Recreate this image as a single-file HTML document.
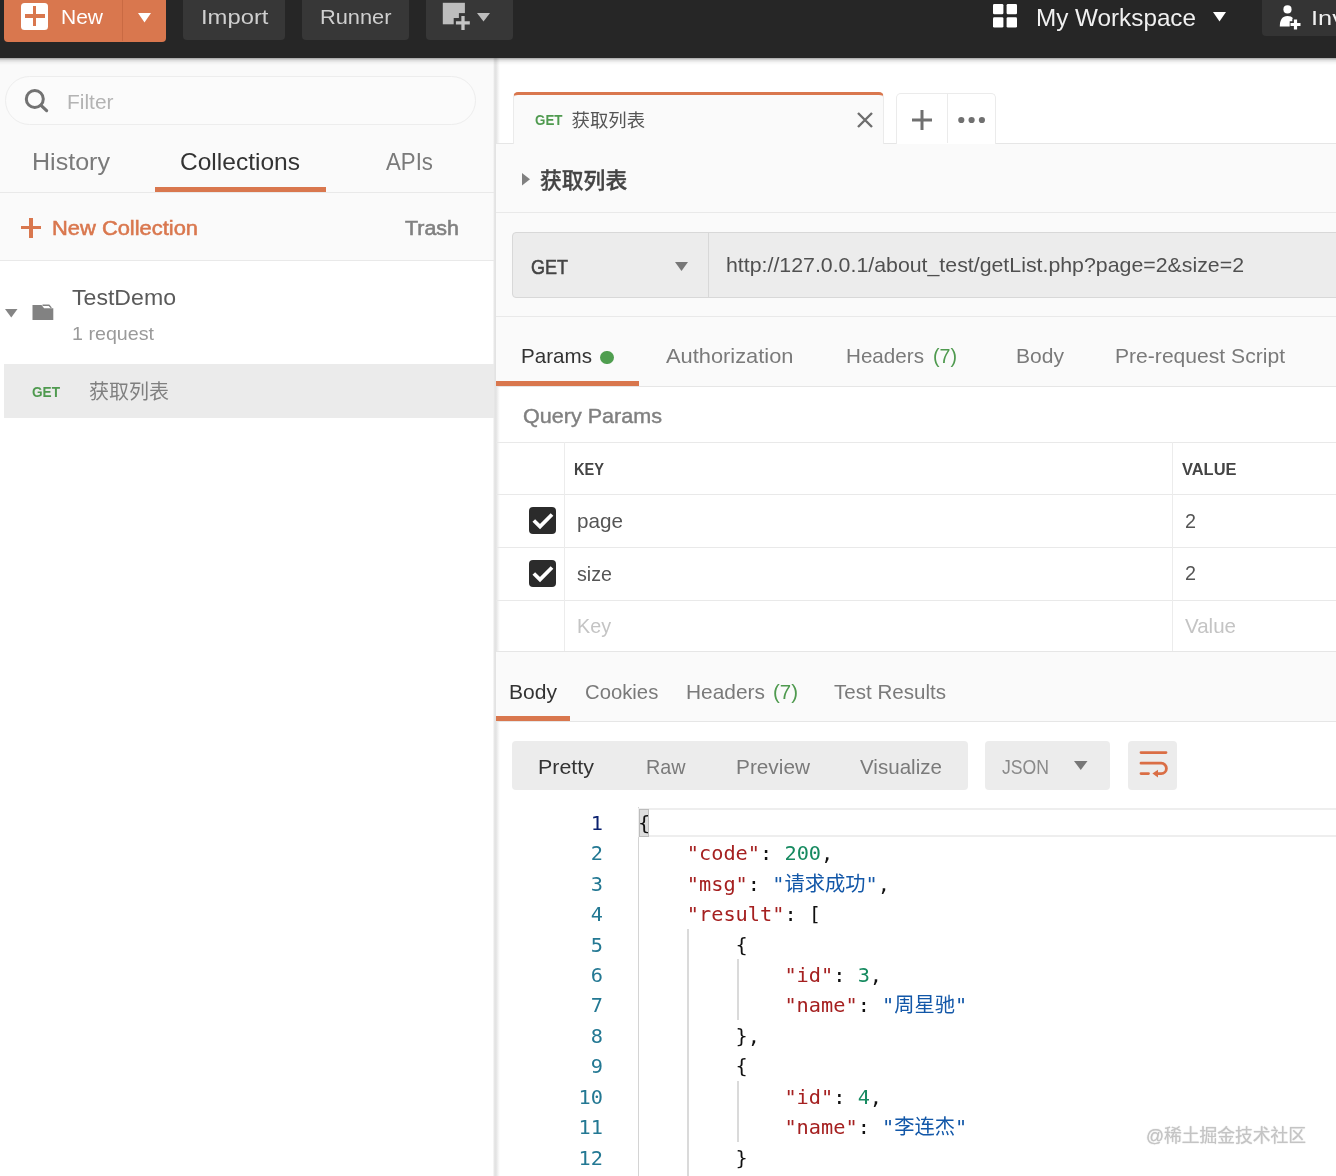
<!DOCTYPE html>
<html lang="zh-CN">
<head>
<meta charset="utf-8">
<title>Postman</title>
<style>
*{box-sizing:border-box;margin:0;padding:0}
html,body{width:1336px;height:1176px;overflow:hidden;background:#fff}
body{position:relative;font-family:"Liberation Sans","Noto Sans CJK SC",sans-serif;-webkit-font-smoothing:antialiased}
.a{position:absolute}
.t{position:absolute;white-space:nowrap;line-height:1;display:block;transform-origin:0 50%}
div{position:absolute}
svg{position:absolute;overflow:visible}
/* top bar */
#top{left:0;top:0;width:1336px;height:58px;background:#262626}
#topsh{left:0;top:58px;width:1336px;height:7px;z-index:5;background:linear-gradient(rgba(0,0,0,.36),rgba(0,0,0,.13) 30%,rgba(0,0,0,.04) 65%,rgba(0,0,0,0))}
.btn{top:-4px;border-radius:4px;background:#373737}
/* sidebar */
#side{left:0;top:58px;width:494px;height:1118px;background:#fafafa}
#sidew{left:0;top:260px;width:494px;height:916px;background:#fff}
#sdiv{left:493px;top:58px;width:7px;height:1118px;background:linear-gradient(to right,#fafafa,#e2e2e2 26%,#e4e4e4 45%,#f4f4f4 75%,#fff)}
.hl{height:1px;background:#e9e9e9}
.vl{width:1px;background:#ececec}
.or{background:#d9774e}
/* code */
.ln{left:540px;width:63px;text-align:right;font-family:"DejaVu Sans Mono","Liberation Mono",monospace;font-size:20.27px;line-height:30.45px;height:30.45px;color:#237893;white-space:pre}
.ln.a{color:#0b216f}
.cl{left:638px;font-family:"DejaVu Sans Mono","Liberation Mono","Noto Sans CJK SC",monospace;font-size:20.27px;line-height:30.45px;height:30.45px;color:#000;white-space:pre}
.ck{color:#a52020}.cn{color:#168a60}.cv{color:#1257a8}.cp{color:#111}
.ig{width:1.500px;background:#dadada}
.cb{width:27px;height:27px;border-radius:4px;background:#2b2b2b}
</style>
</head>
<body>
<!-- ================= TOP BAR ================= -->
<div id="top"></div>
<div class="btn or" style="left:4px;width:162px;height:45.500px;background:#d9774e"></div>
<div style="left:122px;top:0;width:1px;height:41px;background:#c96a43"></div>
<div style="left:21px;top:2.500px;width:27px;height:27px;border-radius:3.500px;background:#fff"></div>
<div class="or" style="left:24.500px;top:14.300px;width:20px;height:3.400px"></div>
<div class="or" style="left:32.800px;top:6px;width:3.400px;height:20px"></div>
<svg style="left:138px;top:12.500px" width="13" height="10"><path d="M0 0h13l-6.500 9.500z" fill="#fff"/></svg>
<div class="btn" style="left:183px;width:102px;height:44.400px"></div>
<div class="btn" style="left:302px;width:106.5px;height:44px"></div>
<div class="btn" style="left:426px;width:87px;height:44.400px"></div>
<svg style="left:442px;top:2px" width="30" height="30"><rect x="0.800" y="0.800" width="22.100" height="21.500" fill="#bdbdbd"/><rect x="16.900" y="11.100" width="9" height="14" fill="#373737"/><rect x="11.700" y="16" width="14" height="9.600" fill="#373737"/><path d="M21 14.100v13.800M13.900 20.800h13.900" stroke="#c4c4c4" stroke-width="3.300" fill="none"/></svg>
<svg style="left:477px;top:13px" width="13" height="9"><path d="M0 0h13l-6.500 8.500z" fill="#bdbdbd"/></svg>
<svg style="left:993.300px;top:4.200px" width="24" height="24"><rect x="0" y="0" width="10.400" height="10.200" rx="1.300" fill="#fff"/><rect x="13.600" y="0" width="10.400" height="10.200" rx="1.300" fill="#fff"/><rect x="0" y="13.300" width="10.400" height="10.200" rx="1.300" fill="#fff"/><rect x="13.600" y="13.300" width="10.400" height="10.200" rx="1.300" fill="#fff"/></svg>
<svg style="left:1213px;top:12px" width="13" height="10"><path d="M0 0h13l-6.500 9.500z" fill="#fff"/></svg>
<div class="btn" style="left:1261.500px;width:90px;height:40.300px;background:#343434"></div>
<svg style="left:1279px;top:5px" width="23" height="26"><circle cx="8.500" cy="4.400" r="4.100" fill="#fff"/><path d="M0.800 21.600C0.800 14.500 3.300 11 8.500 11C11 11 12.800 11.800 14 13.200L14 21.600Z" fill="#fff"/><path d="M16.500 13.600v11.600M10.700 19.400h11.600" stroke="#343434" stroke-width="6.400" fill="none"/><path d="M16.500 14.500v10M11.500 19.500h10" stroke="#fff" stroke-width="3.200" fill="none"/></svg>
<div id="topsh"></div>

<!-- ================= SIDEBAR ================= -->
<div id="side"></div>
<div id="sidew"></div>
<div id="sdiv"></div>
<div style="left:5px;top:75.500px;width:471px;height:49.500px;border-radius:25px;border:1px solid #ededed;background:#fbfbfb"></div>
<svg style="left:22px;top:88px" width="28" height="28"><circle cx="12.800" cy="11" r="8.500" fill="none" stroke="#727272" stroke-width="3"/><path d="M19 17.400l5.600 5.200" stroke="#727272" stroke-width="3.200" stroke-linecap="round"/></svg>
<div class="or" style="left:154.500px;top:187px;width:171px;height:5px"></div>
<div class="hl" style="left:0;top:192px;width:494px"></div>
<div class="or" style="left:21px;top:226px;width:20px;height:3.300px"></div>
<div class="or" style="left:29.400px;top:217.600px;width:3.300px;height:20px"></div>
<div class="hl" style="left:0;top:260px;width:494px"></div>
<svg style="left:4.500px;top:308.500px" width="13" height="9"><path d="M0 0h12.500l-6.250 8.500z" fill="#858585"/></svg>
<svg style="left:32px;top:304px" width="22" height="17"><path d="M0.500 1h9l2.600 3.200h9.200v11.800h-20.800z" fill="#828282"/><path d="M10.500 1.300h6.500l2.300 2.600" fill="none" stroke="#828282" stroke-width="1.400"/></svg>
<div style="left:4px;top:364px;width:490px;height:54px;background:#ebebeb"></div>

<!-- ================= MAIN ================= -->
<div style="left:496px;top:143px;width:840px;height:243px;background:#fafafa"></div>
<div class="hl" style="left:496px;top:143px;width:840px;background:#e6e6e6"></div>
<!-- active tab -->
<div style="left:513px;top:92px;width:371px;height:52px;background:#fafafa;border:1px solid #ebebeb;border-bottom:0;border-top:3.500px solid #d9774e;border-radius:5px 5px 0 0"></div>
<svg style="left:857px;top:112px" width="16" height="16"><path d="M1 1l14 14M15 1l-14 14" stroke="#6e6e6e" stroke-width="2.400"/></svg>
<div style="left:896px;top:93px;width:100px;height:51px;background:#fff;border:1px solid #ebebeb;border-bottom:0;border-radius:5px 5px 0 0"></div>
<div class="vl" style="left:947px;top:94px;height:49px;background:#ebebeb"></div>
<svg style="left:912px;top:109.500px" width="20" height="20"><path d="M10 0v20M0 10h20" stroke="#707070" stroke-width="3"/></svg>
<svg style="left:958px;top:115.500px" width="28" height="8"><circle cx="3.300" cy="4" r="3.100" fill="#707070"/><circle cx="13.600" cy="4" r="3.100" fill="#707070"/><circle cx="23.900" cy="4" r="3.100" fill="#707070"/></svg>
<!-- title row -->
<svg style="left:522px;top:173px" width="9" height="13"><path d="M0 0l8 6.250l-8 6.250z" fill="#808080"/></svg>
<div class="hl" style="left:496px;top:212px;width:840px"></div>
<!-- url bar -->
<div style="left:512px;top:231.700px;width:840px;height:66.300px;background:#ececec;border:1px solid #d8d8d8;border-radius:4px"></div>
<div class="vl" style="left:708px;top:232px;height:65px;background:#d8d8d8"></div>
<svg style="left:675px;top:262px" width="13" height="9"><path d="M0 0h13l-6.500 9z" fill="#777"/></svg>
<div class="hl" style="left:496px;top:316px;width:840px"></div>
<!-- request tabs -->
<div style="left:600px;top:350.500px;width:13.500px;height:13.500px;border-radius:50%;background:#4f9e4f"></div>
<div class="or" style="left:496px;top:380.500px;width:143px;height:5px"></div>
<div class="hl" style="left:496px;top:385.500px;width:840px;background:#e6e6e6"></div>
<!-- table -->
<div class="hl" style="left:496px;top:442px;width:840px"></div>
<div class="hl" style="left:496px;top:494px;width:840px"></div>
<div class="hl" style="left:496px;top:546.500px;width:840px"></div>
<div class="hl" style="left:496px;top:600px;width:840px"></div>
<div class="vl" style="left:564px;top:442px;height:209px"></div>
<div class="vl" style="left:1171.500px;top:442px;height:209px"></div>
<div class="cb" style="left:529px;top:507px"></div>
<svg style="left:529px;top:507px" width="27" height="27"><path d="M4.800 13.500l6.200 6l12-12" stroke="#fff" stroke-width="3.800" fill="none"/></svg>
<div class="cb" style="left:529px;top:559.700px"></div>
<svg style="left:529px;top:559.700px" width="27" height="27"><path d="M4.800 13.500l6.200 6l12-12" stroke="#fff" stroke-width="3.800" fill="none"/></svg>
<!-- response -->
<div style="left:496px;top:651px;width:840px;height:70px;background:#fafafa"></div>
<div class="hl" style="left:496px;top:651px;width:840px;background:#e6e6e6"></div>
<div class="or" style="left:496px;top:715.700px;width:74px;height:5.300px"></div>
<div class="hl" style="left:496px;top:721px;width:840px;background:#e6e6e6"></div>
<div style="left:512px;top:740.500px;width:455.500px;height:49px;border-radius:4px;background:#ececec"></div>
<div style="left:985px;top:740.500px;width:125px;height:49px;border-radius:4px;background:#ececec"></div>
<svg style="left:1073.500px;top:761px" width="14" height="9"><path d="M0 0h13.500l-6.750 9z" fill="#777"/></svg>
<div style="left:1127.500px;top:740.500px;width:49.500px;height:49px;border-radius:4px;background:#ececec"></div>
<svg style="left:1139.500px;top:751px" width="28" height="27"><path d="M1 1.600h25M1 12.200h20.200a5.200 5.200 0 0 1 0 10.400h-4.500M1 22.600h7.500" stroke="#da6e45" stroke-width="2.800" fill="none" stroke-linecap="round"/><path d="M18 18.800v7.600l-5.600-3.800z" fill="#da6e45"/></svg>
<!-- code -->
<div class="vl" style="left:638px;top:807px;height:369px;background:#d4d4d4"></div>
<div style="left:638px;top:808px;width:700px;height:29px;border:2px solid #eee"></div>
<div style="left:638.500px;top:808.500px;width:10.500px;height:28.500px;background:#dedede;border:1px solid #bcbcbc"></div>
<div class="ig" style="left:687px;top:929px;height:247px"></div>
<div class="ig" style="left:737px;top:959px;height:61px"></div>
<div class="ig" style="left:737px;top:1081px;height:61px"></div>
<div id="txt" style="left:0;top:0;width:1336px;height:1176px;will-change:transform">
<div class="ln a" style="top:807.70px">1</div>
<div class="cl" style="top:807.70px"><span class="cp">{</span></div>
<div class="ln" style="top:838.15px">2</div>
<div class="cl" style="top:838.15px">    <span class="ck">"code"</span><span class="cp">: </span><span class="cn">200</span><span class="cp">,</span></div>
<div class="ln" style="top:868.60px">3</div>
<div class="cl" style="top:868.60px">    <span class="ck">"msg"</span><span class="cp">: </span><span class="cv">"请求成功"</span><span class="cp">,</span></div>
<div class="ln" style="top:899.05px">4</div>
<div class="cl" style="top:899.05px">    <span class="ck">"result"</span><span class="cp">: [</span></div>
<div class="ln" style="top:929.50px">5</div>
<div class="cl" style="top:929.50px">        <span class="cp">{</span></div>
<div class="ln" style="top:959.95px">6</div>
<div class="cl" style="top:959.95px">            <span class="ck">"id"</span><span class="cp">: </span><span class="cn">3</span><span class="cp">,</span></div>
<div class="ln" style="top:990.40px">7</div>
<div class="cl" style="top:990.40px">            <span class="ck">"name"</span><span class="cp">: </span><span class="cv">"周星驰"</span></div>
<div class="ln" style="top:1020.85px">8</div>
<div class="cl" style="top:1020.85px">        <span class="cp">},</span></div>
<div class="ln" style="top:1051.30px">9</div>
<div class="cl" style="top:1051.30px">        <span class="cp">{</span></div>
<div class="ln" style="top:1081.75px">10</div>
<div class="cl" style="top:1081.75px">            <span class="ck">"id"</span><span class="cp">: </span><span class="cn">4</span><span class="cp">,</span></div>
<div class="ln" style="top:1112.20px">11</div>
<div class="cl" style="top:1112.20px">            <span class="ck">"name"</span><span class="cp">: </span><span class="cv">"李连杰"</span></div>
<div class="ln" style="top:1142.65px">12</div>
<div class="cl" style="top:1142.65px">        <span class="cp">}</span></div>
<span class="t" style="left:61px;top:7.28px;font-size:20.3px;color:#ffffff;transform:scaleX(1.0350);">New</span>
<span class="t" style="left:200.5px;top:7.28px;font-size:20.3px;color:#cfcfcf;transform:scaleX(1.1742);">Import</span>
<span class="t" style="left:319.5px;top:7.28px;font-size:20.3px;color:#cfcfcf;transform:scaleX(1.0747);">Runner</span>
<span class="t" style="left:1036px;top:5.88px;font-size:24.4px;color:#f0f0f0;transform:scaleX(0.9948);">My Workspace</span>
<span class="t" style="left:1311.3px;top:6.94px;font-size:21px;color:#f0f0f0;transform:scaleX(1.2091);">Invite</span>
<span class="t" style="left:67.3px;top:91.64px;font-size:20.8px;color:#b3b3b3;transform:scaleX(1.0061);">Filter</span>
<span class="t" style="left:32px;top:150.92px;font-size:23.7px;color:#7a7a7a;transform:scaleX(1.0583);">History</span>
<span class="t" style="left:180px;top:150.92px;font-size:23.7px;color:#333333;transform:scaleX(1.0357);">Collections</span>
<span class="t" style="left:386px;top:150.92px;font-size:23.7px;color:#7a7a7a;transform:scaleX(0.9394);">APIs</span>
<span class="t" style="left:52px;top:217.88px;font-size:20.3px;color:#d9774e;-webkit-text-stroke:0.55px;transform:scaleX(1.0794);">New Collection</span>
<span class="t" style="left:405px;top:217.88px;font-size:20.3px;color:#808080;-webkit-text-stroke:0.55px;transform:scaleX(1.0569);">Trash</span>
<span class="t" style="left:72px;top:287.45px;font-size:22px;color:#5a5a5a;transform:scaleX(1.0500);">TestDemo</span>
<span class="t" style="left:72px;top:324.61px;font-size:18.6px;color:#9a9a9a;transform:scaleX(1.0576);">1 request</span>
<span class="t" style="left:32px;top:384.07px;font-size:15.2px;color:#4f9a4f;font-weight:700;transform:scaleX(0.8964);">GET</span>
<span class="t" style="left:89px;top:382.28px;font-size:20.3px;color:#808080;transform:scaleX(0.9859);">获取列表</span>
<span class="t" style="left:534.5px;top:113.47px;font-size:14.4px;color:#4f9a4f;font-weight:700;transform:scaleX(0.9293);">GET</span>
<span class="t" style="left:571.5px;top:111.71px;font-size:18.4px;color:#555555;">获取列表</span>
<span class="t" style="left:540px;top:169.85px;font-size:21.8px;color:#444444;font-weight:500;-webkit-text-stroke:0.35px;">获取列表</span>
<span class="t" style="left:531px;top:256.58px;font-size:20.3px;color:#444444;-webkit-text-stroke:0.55px;transform:scaleX(0.8872);">GET</span>
<span class="t" style="left:726px;top:254.78px;font-size:20.3px;color:#505050;transform:scaleX(1.0512);">http://127.0.0.1/about_test/getList.php?page=2&amp;size=2</span>
<span class="t" style="left:521px;top:346.28px;font-size:20.3px;color:#333333;transform:scaleX(1.0159);">Params</span>
<span class="t" style="left:665.5px;top:346.28px;font-size:20.3px;color:#7a7a7a;transform:scaleX(1.0769);">Authorization</span>
<span class="t" style="left:846px;top:346.28px;font-size:20.3px;color:#7a7a7a;transform:scaleX(1.0173);">Headers</span>
<span class="t" style="left:933px;top:346.28px;font-size:20.3px;color:#4f9a4f;transform:scaleX(0.9679);">(7)</span>
<span class="t" style="left:1016px;top:346.28px;font-size:20.3px;color:#7a7a7a;transform:scaleX(1.0382);">Body</span>
<span class="t" style="left:1115px;top:346.28px;font-size:20.3px;color:#7a7a7a;transform:scaleX(1.0401);">Pre-request Script</span>
<span class="t" style="left:523px;top:406.18px;font-size:20.3px;color:#808080;transform:scaleX(1.0631);-webkit-text-stroke:0.4px;">Query Params</span>
<span class="t" style="left:574px;top:462.18px;font-size:15.6px;color:#444444;font-weight:700;transform:scaleX(0.9352);">KEY</span>
<span class="t" style="left:1181.5px;top:462.18px;font-size:15.6px;color:#444444;font-weight:700;transform:scaleX(1.0541);">VALUE</span>
<span class="t" style="left:577px;top:511.48px;font-size:20.3px;color:#555555;transform:scaleX(1.0194);">page</span>
<span class="t" style="left:577px;top:563.68px;font-size:20.3px;color:#555555;transform:scaleX(0.9701);">size</span>
<span class="t" style="left:1185px;top:510.58px;font-size:20.3px;color:#555555;transform:scaleX(0.9751);">2</span>
<span class="t" style="left:1185px;top:563.08px;font-size:20.3px;color:#555555;transform:scaleX(0.9751);">2</span>
<span class="t" style="left:577px;top:615.58px;font-size:20.3px;color:#c4c4c4;transform:scaleX(0.9727);">Key</span>
<span class="t" style="left:1185px;top:615.58px;font-size:20.3px;color:#c4c4c4;transform:scaleX(1.0124);">Value</span>
<span class="t" style="left:509px;top:682.28px;font-size:20.3px;color:#333333;transform:scaleX(1.0382);">Body</span>
<span class="t" style="left:585px;top:682.28px;font-size:20.3px;color:#7a7a7a;">Cookies</span>
<span class="t" style="left:686px;top:682.28px;font-size:20.3px;color:#7a7a7a;transform:scaleX(1.0304);">Headers</span>
<span class="t" style="left:773px;top:682.28px;font-size:20.3px;color:#4f9a4f;transform:scaleX(1.0082);">(7)</span>
<span class="t" style="left:834px;top:682.28px;font-size:20.3px;color:#7a7a7a;transform:scaleX(1.0139);">Test Results</span>
<span class="t" style="left:538px;top:756.78px;font-size:20.3px;color:#333333;transform:scaleX(1.0569);">Pretty</span>
<span class="t" style="left:645.5px;top:756.78px;font-size:20.3px;color:#7a7a7a;transform:scaleX(0.9734);">Raw</span>
<span class="t" style="left:736px;top:756.78px;font-size:20.3px;color:#7a7a7a;transform:scaleX(1.0258);">Preview</span>
<span class="t" style="left:860px;top:756.78px;font-size:20.3px;color:#7a7a7a;transform:scaleX(1.0147);">Visualize</span>
<span class="t" style="left:1002px;top:756.78px;font-size:20.3px;color:#8a8a8a;transform:scaleX(0.8689);">JSON</span>
<span class="t" style="left:1145.5px;top:1127.21px;font-size:18px;color:#c4c4c4;transform:scaleX(0.9859);text-shadow:0 0 2px #fff,0 0 1px #999;">@稀土掘金技术社区</span>
</div>
</body>
</html>
